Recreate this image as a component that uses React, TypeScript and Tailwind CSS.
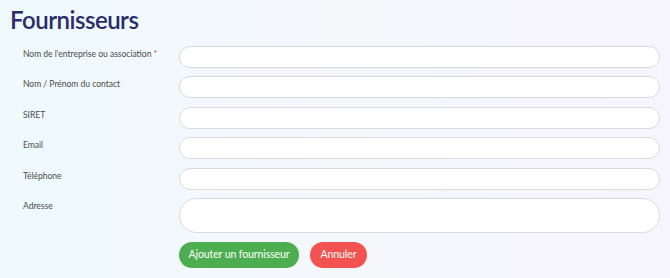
import React from "react";

const fields = [
  { label: "Nom de l'entreprise ou association", required: true },
  { label: "Nom / Prénom du contact" },
  { label: "SIRET" },
  { label: "Email" },
  { label: "Téléphone" },
];

export default function App() {
  return (
    <div
      className="w-[670px] h-[278px] overflow-hidden bg-gradient-to-r from-[#eefafd] via-[#f5f7fb] to-[#f6f5fc] text-[#555]"
      style={{ fontFamily: 'Lato, "Open Sans", sans-serif' }}
    >
      <div className="pl-[10px] pr-[10px] pt-[4px]">
        <h1 className="text-[24px] leading-[32px] font-semibold text-[#2a2c6b] tracking-[-0.5px]">
          Fournisseurs
        </h1>
        <div className="mt-[10px] flex flex-col gap-[8.4px]">
          {fields.map((f) => (
            <div key={f.label} className="flex items-start">
              <div className="w-[169px] pl-[13px] pt-[2px] text-[8.5px] leading-[12px] text-[#4a4a4a]">
                {f.label}
                {f.required && <span className="text-[#e53935]"> *</span>}
              </div>
              <input
                className="flex-1 h-[22px] rounded-full border border-[#d9dae0] bg-white outline-none"
                type="text"
              />
            </div>
          ))}
          <div className="flex items-start">
            <div className="w-[169px] pl-[13px] pt-[2px] text-[8.5px] leading-[12px] text-[#4a4a4a]">
              Adresse
            </div>
            <textarea className="flex-1 h-[35px] rounded-[18px] border border-[#d9dae0] bg-white outline-none resize-none" />
          </div>
          <div className="flex items-center gap-[11px] pl-[169px] pt-[0.5px]">
            <button className="h-[26px] w-[120px] rounded-full bg-[#4cae50] text-white text-[10.5px] tracking-[-0.1px]">
              Ajouter un fournisseur
            </button>
            <button className="h-[26px] w-[57px] rounded-full bg-[#f25350] text-white text-[10.5px] tracking-[-0.1px]">
              Annuler
            </button>
          </div>
        </div>
      </div>
    </div>
  );
}
